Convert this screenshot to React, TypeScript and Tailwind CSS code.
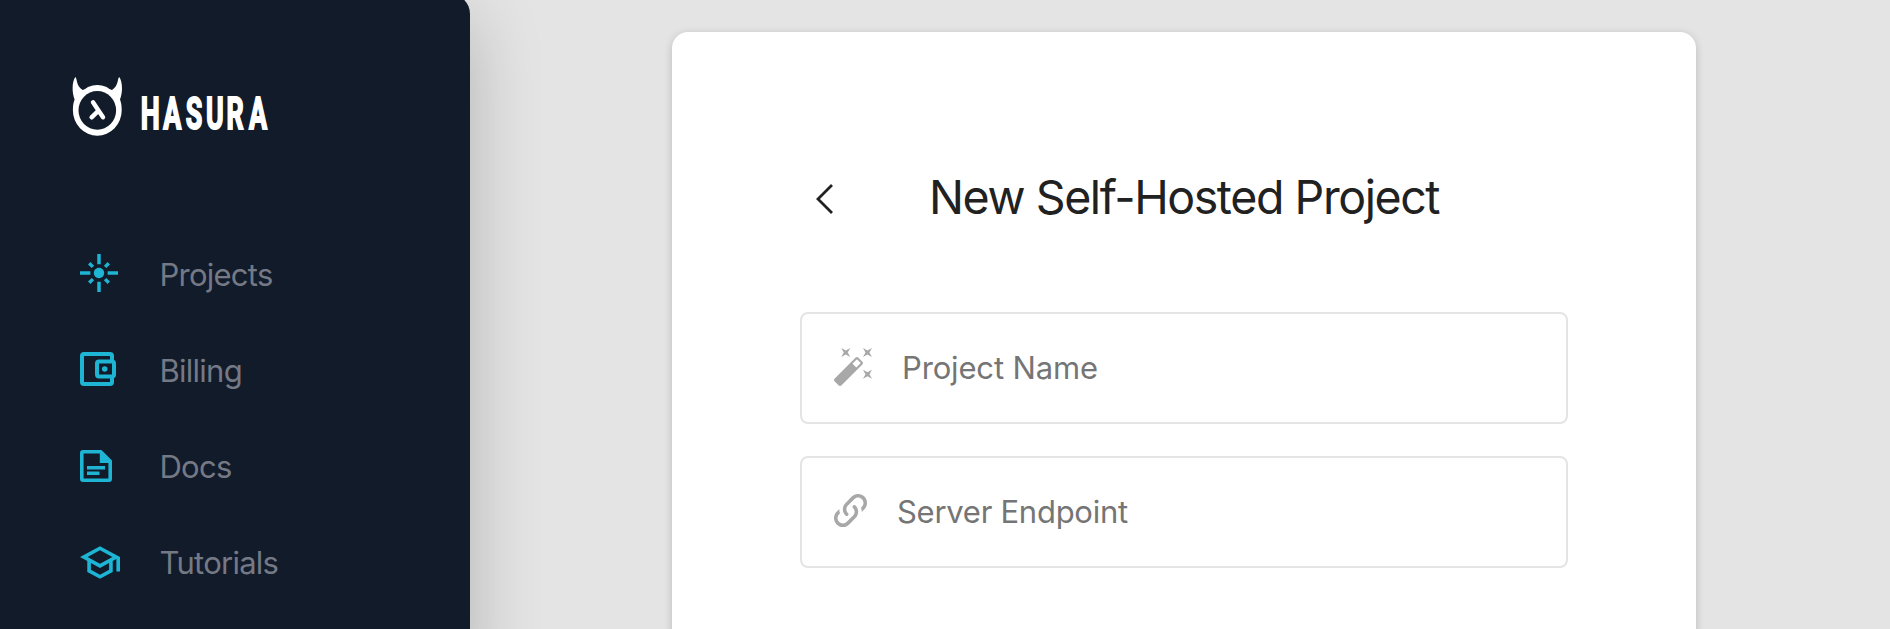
import React from "react";

function Flare() {
  return (
    <svg className="h-[38px] w-[38px]" viewBox="1 1 22 22" fill="currentColor">
      <path d="M7 11H1v2h6v-2zm2.17-3.24L7.05 5.64 5.64 7.05l2.12 2.12 1.41-1.41zM13 1h-2v6h2V1zm5.36 6.05l-1.41-1.41-2.12 2.12 1.41 1.41 2.12-2.12zM17 11v2h6v-2h-6zm-5-2c-1.66 0-3 1.34-3 3s1.34 3 3 3 3-1.34 3-3-1.34-3-3-3zm2.83 7.24l2.12 2.12 1.41-1.41-2.12-2.12-1.41 1.41zm-9.19.71l1.41 1.41 2.12-2.12-1.41-1.41-2.12 2.12zM11 23h2v-6h-2v6z" />
    </svg>
  );
}

function Wallet() {
  return (
    <svg className="h-[34px] w-[36px]" viewBox="0 0 36 34" fill="none" stroke="currentColor" strokeWidth="4">
      <path d="M32 9V4Q32 2 30 2H4Q2 2 2 4V30Q2 32 4 32H30Q32 32 32 30V25" />
      <rect x="17" y="9.5" width="17" height="15" rx="2" />
      <circle cx="24.7" cy="17" r="2.8" fill="currentColor" stroke="none" />
    </svg>
  );
}

function Doc() {
  return (
    <svg className="mt-0.5 h-8 w-8" viewBox="0 0 32 32" fill="currentColor">
      <path fillRule="evenodd" d="M3 0H21.5L32 10.5V29a3 3 0 0 1-3 3H3a3 3 0 0 1-3-3V3a3 3 0 0 1 3-3ZM3.6 3.6V28.4H28.4V13H19.8V3.6Z" />
      <path d="M7 16h18v3.5H7zM7 21.5h12.5V25H7z" />
    </svg>
  );
}

function School() {
  return (
    <svg className="mt-0.5 h-[33px] w-10" viewBox="1 3 22 18" fill="currentColor">
      <path d="M12 3L1 9l4 2.18v6L12 21l7-3.82v-6l2-1.09V17h2V9L12 3zm6.82 6L12 12.72 5.18 9 12 5.28 18.82 9zM17 15.99l-5 2.73-5-2.73v-3.72L12 15l5-2.73v3.72z" />
    </svg>
  );
}

function Wand() {
  return (
    <svg className="mb-0.5 h-[38px] w-[38px]" viewBox="1 2 21 21" fill="currentColor">
      <path d="M7.5 5.6L10 7 8.6 4.5 10 2 7.5 3.4 5 2l1.4 2.5L5 7zm12 9.8L17 14l1.4 2.5L17 19l2.5-1.4L22 19l-1.4-2.5L22 14zM22 2l-2.5 1.4L17 2l1.4 2.5L17 7l2.5-1.4L22 7l-1.4-2.5zm-7.63 5.29c-.39-.39-1.02-.39-1.41 0L1.29 18.96c-.39.39-.39 1.02 0 1.41l2.34 2.34c.39.39 1.02.39 1.41 0L16.7 11.05c.39-.39.39-1.02 0-1.41l-2.33-2.35zm-1.03 5.49l-2.12-2.12 2.44-2.44 2.12 2.12-2.44 2.44z" />
    </svg>
  );
}

function Chain() {
  return (
    <svg className="mb-[3px] h-[33px] w-[33px]" viewBox="2.76 2.76 18.48 18.48" fill="currentColor">
      <path d="M10.59,13.41C11,13.8 11,14.44 10.59,14.83C10.2,15.22 9.56,15.22 9.17,14.83C7.22,12.88 7.22,9.71 9.17,7.76V7.76L12.71,4.22C14.66,2.27 17.83,2.27 19.78,4.22C21.73,6.17 21.73,9.34 19.78,11.29L18.29,12.78C18.3,11.96 18.17,11.14 17.89,10.36L18.36,9.88C19.54,8.71 19.54,6.81 18.36,5.64C17.19,4.46 15.29,4.46 14.12,5.64L10.59,9.17C9.41,10.34 9.41,12.24 10.59,13.41M13.41,9.17C13.8,8.78 14.44,8.78 14.83,9.17C16.78,11.12 16.78,14.29 14.83,16.24V16.24L11.29,19.78C9.34,21.73 6.17,21.73 4.22,19.78C2.27,17.83 2.27,14.66 4.22,12.71L5.71,11.22C5.7,12.04 5.83,12.86 6.11,13.65L5.64,14.12C4.46,15.29 4.46,17.19 5.64,18.36C6.81,19.54 8.71,19.54 9.88,18.36L13.41,14.83C14.59,13.66 14.59,11.76 13.41,10.59C13,10.2 13,9.56 13.41,9.17Z" />
    </svg>
  );
}

function Logo() {
  return (
    <svg className="block h-[62px] w-[200px]" viewBox="0 0 200 62" fill="white">
      <path d="M3.4 0C5.2 1 4 9 10.600 13Q13 12.500 16 10Q25.300 6.200 34.600 10Q37.600 12.500 40 13C46.600 9 45.400 1 47.200 0C50.500 4 51 15 48 22.500C49.300 26 49.700 29 49.700 33.400A24.400 25.300 0 0 1 .9 33.400C.9 29 1.300 26 2.600 22.500C-.4 15 .1 4 3.400 0Z" />
      <ellipse cx="25.3" cy="33.4" rx="18.8" ry="19.4" fill="#111b29" />
      <path d="M21 25.3L31 40.3M26.300 33.800L19.600 40.300" fill="none" stroke="white" strokeWidth="4.4" strokeLinecap="round" strokeLinejoin="round" />
      <g transform="translate(0 51.6) scale(.61 1)" stroke="white" strokeWidth="2">
        <text x="112.6 149.7 186.500 219.500 253.300 290" y="0" className="font-['Roboto'] text-[44px] font-bold">HASURA</text>
      </g>
    </svg>
  );
}

const links = [
  { label: "Projects", Icon: Flare },
  { label: "Billing", Icon: Wallet },
  { label: "Docs", Icon: Doc },
  { label: "Tutorials", Icon: School },
];

const fields = [
  { label: "Project Name", Icon: Wand, tracking: "tracking-[-0.15px]" },
  { label: "Server Endpoint", Icon: Chain, tracking: "tracking-[-0.27px]" },
];

export default function App() {
  return (
    <div className="flex h-[629px] overflow-hidden bg-[#e4e4e4] font-['Inter',sans-serif]">
      <aside className="-mt-1.5 h-[680px] w-[470px] shrink-0 rounded-tr-[20px] bg-[#111b29] pt-[83px] shadow-[0_24px_72px_rgba(0,0,0,0.22)]">
        <div className="pl-[72px]">
          <Logo />
        </div>
        <nav className="mt-[86px] flex flex-col pl-20">
          {links.map(({ label, Icon }) => (
            <a key={label} className="flex h-24 items-center text-[#1eb4d4]">
              <span className="flex w-[79.5px] items-center">
                <Icon />
              </span>
              <span className="pt-1 text-[31px] tracking-[-0.75px] text-[#747985]">{label}</span>
            </a>
          ))}
        </nav>
      </aside>
      <main className="ml-[202px] mt-8 h-[680px] w-[1024px] shrink-0 rounded-[16px] bg-white px-32 pt-[136px] shadow-[0_2px_8px_rgba(0,0,0,0.18)]">
        <header className="flex h-[60px] items-center">
          <svg className="ml-4 mt-0.5 h-[30px] w-[18px]" viewBox="0 0 18 30" fill="none" stroke="#212121" strokeWidth="2.8">
            <path d="M16 1L2 15L16 29" />
          </svg>
          <h1 className="ml-[95px] whitespace-nowrap text-[46.5px] font-normal tracking-[-1.42px] text-[#212121]">New Self-Hosted Project</h1>
        </header>
        <div className="mt-[84px] flex flex-col gap-8">
          {fields.map(({ label, Icon, tracking }) => (
            <div key={label} className="flex h-28 items-center gap-[30px] rounded-lg border-2 border-[#e4e4e4] pl-8 text-[#a8a8a8]">
              <Icon />
              <span className={"pt-px text-[31px] text-[#757575] " + tracking}>{label}</span>
            </div>
          ))}
        </div>
      </main>
    </div>
  );
}
